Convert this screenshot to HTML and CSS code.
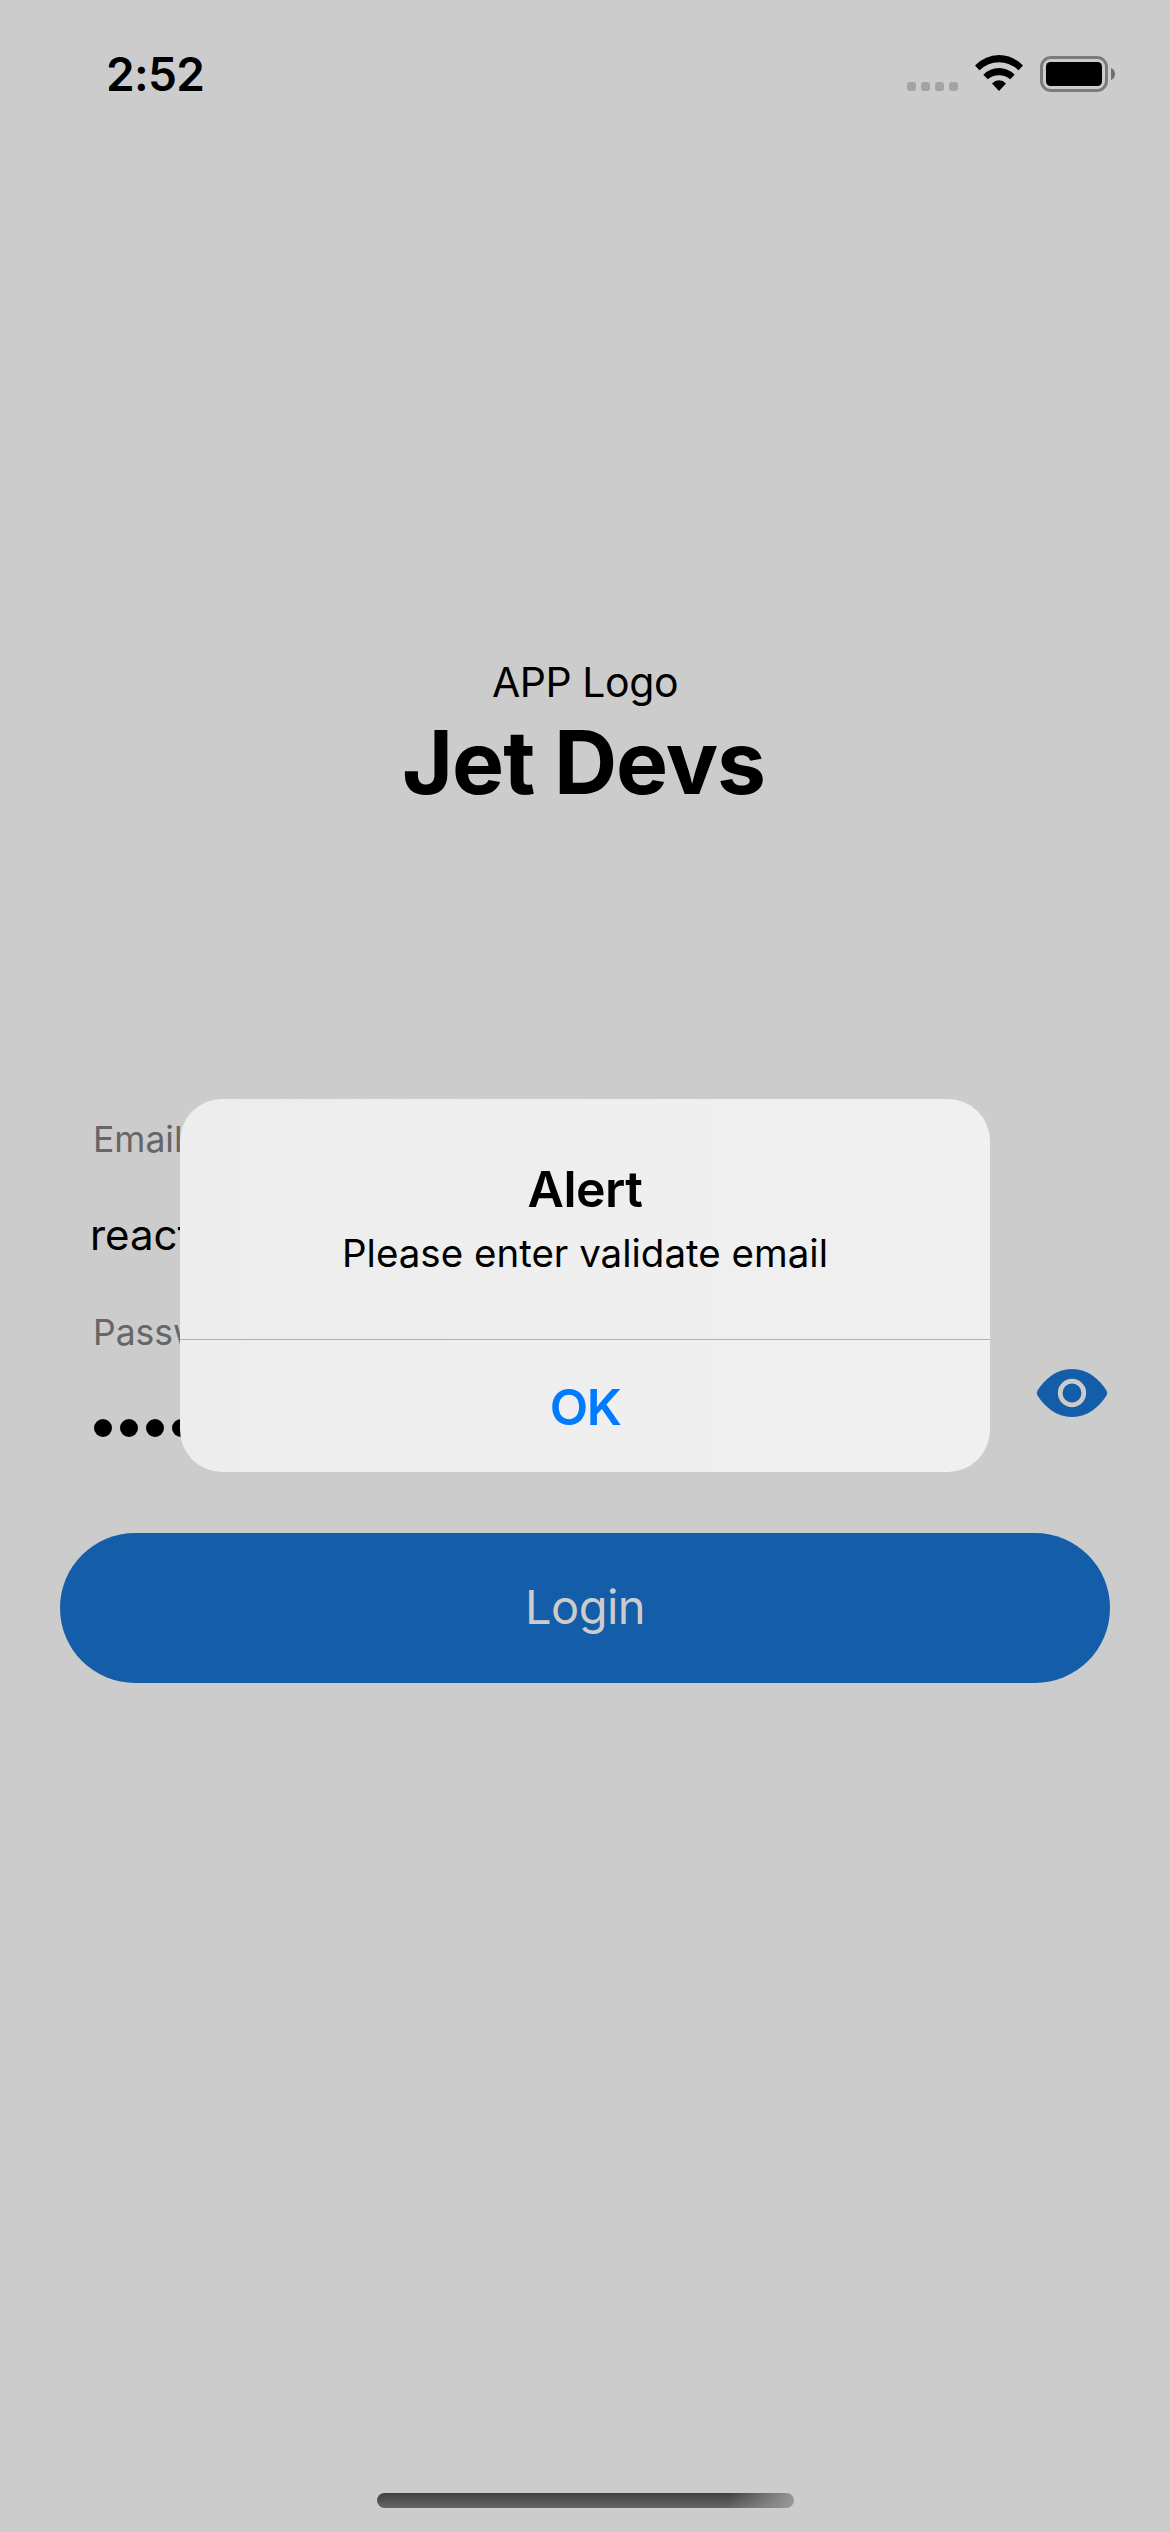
FILE: index.html
```html
<!DOCTYPE html>
<html lang="en">
<head>
<meta charset="utf-8">
<title>Jet Devs</title>
<link rel="stylesheet" href="styles.css">
</head>
<body>
<div class="screen">
  <header class="status">
    <span class="time">2:52</span>
    <div class="indicators">
      <div class="signal"><i></i><i></i><i></i><i></i></div>
      <svg class="wifi" width="50" height="38" viewBox="0 0 50 38">
        <path d="M1 11.5Q11.5 1 25 1T49 11.5L44.5 16.3Q36 8.2 25 8.2T5.500 16.300Z"/>
        <path d="M9.300 20.700Q16 14 25 14T40.700 20.700L36.200 25.300Q31.500 21.200 25 21.200T13.800 25.300Z"/>
        <path d="M18 29.500Q21 26.300 25 26.300T32 29.500L25 37Z"/>
      </svg>
      <svg class="battery" width="76" height="36" viewBox="0 0 76 36">
        <rect x="1.500" y="1.500" width="65" height="33" rx="9.500" fill="none" stroke="#7b7b7b" stroke-width="3"/>
        <rect x="6" y="6" width="56" height="24" rx="4.500"/>
        <path d="M71 12Q75 13.500 75 18T71 24Z" fill="#707070"/>
      </svg>
    </div>
  </header>
  <main>
    <section class="brand">
      <p class="logo">APP Logo</p>
      <h1>Jet Devs</h1>
    </section>
    <section class="form">
      <div class="label">Email</div>
      <div class="value">react</div>
      <div class="label">Password</div>
      <div class="secret">
        <div class="bullets"><i></i><i></i><i></i><i></i></div>
        <svg class="eye" width="72" height="48" viewBox="0 0 72 48">
          <path d="M36 0C52 0 63 10 70.500 21.500Q72 24 70.500 26.500C63 38 52 48 36 48S9 38 1.500 26.500Q0 24 1.500 21.500C9 10 20 0 36 0Z" fill="#145da8"/>
          <circle cx="36" cy="24" r="11.800" fill="none" stroke="#ccc" stroke-width="4.700"/>
        </svg>
      </div>
      <button class="login">Login</button>
    </section>
  </main>
  <div class="home"></div>
  <div class="alert">
    <div class="alert-body">
      <h2>Alert</h2>
      <p>Please enter validate email</p>
    </div>
    <button class="ok">OK</button>
  </div>
</div>
</body>
</html>
```

FILE: styles.css
```css
* { box-sizing: border-box; margin: 0; padding: 0; }
body { background: #ccc; font-family: Inter, "Liberation Sans", sans-serif; color: #000; }
button { border: 0; font-family: inherit; }
.screen { position: relative; width: 1170px; height: 2532px; display: flex; flex-direction: column; overflow: hidden; background: #ccc; }
.status { height: 141px; padding: 44px 54px 0 106px; display: flex; justify-content: space-between; align-items: flex-start; }
.time { font-size: 46px; line-height: 60px; font-weight: 600; letter-spacing: -0.7px; }
.indicators { display: flex; align-items: flex-end; height: 48px; }
.signal { display: flex; gap: 5px; margin: 0 16px 1px 0; }
.signal i { width: 9px; height: 9px; border-radius: 3px; background: #a3a3a3; }
.wifi { margin-right: 16px; }
main { flex: 1; padding: 516px 60px 0; }
.brand { text-align: center; height: 460px; }
.logo { font-size: 41px; line-height: 50px; margin-bottom: 3px; letter-spacing: -0.45px; }
h1 { font-size: 87.5px; line-height: 104px; font-weight: 700; letter-spacing: -1px; padding-right: 3px; }
.form { display: flex; flex-direction: column; }
.label { font-size: 35.5px; line-height: 45px; margin-bottom: -1px; padding-left: 33px; color: #666; }
.value { font-size: 42px; line-height: 52px; padding-left: 30px; margin: 48px 0 49px; }
.secret { height: 179px; padding: 15px 2px 0 34px; display: flex; justify-content: space-between; align-items: flex-start; }
.bullets { display: flex; gap: 8px; margin-top: 50px; }
.bullets i { width: 18px; height: 18px; border-radius: 50%; background: #000; }
.login { height: 150px; padding-bottom: 3px; border-radius: 75px; background: #145da8; color: #ccc; font-size: 47px; font-weight: 400; letter-spacing: -0.5px; }
.home { width: 417px; height: 15px; margin: 0 auto 24px 377px; border-radius: 8px; background: linear-gradient(100deg, transparent 84%, #999 100%), linear-gradient(#404040, #666); }
.alert { position: absolute; left: 180px; top: 1099px; width: 810px; height: 373px; border-radius: 42px; overflow: hidden; background: linear-gradient(90deg, #ededed, #f0f0f0); display: flex; flex-direction: column; text-align: center; }
.alert-body { height: 240px; padding-top: 59px; }
h2 { font-size: 50px; line-height: 62px; font-weight: 600; letter-spacing: -0.5px; }
.alert-body p { font-size: 38.5px; line-height: 48px; margin-top: 9px; }
.ok { height: 133px; padding-top: 2px; border-top: 1px solid #b0b0b0; background: none; color: #007aff; font-size: 50px; font-weight: 600; letter-spacing: -1.5px; }
```
